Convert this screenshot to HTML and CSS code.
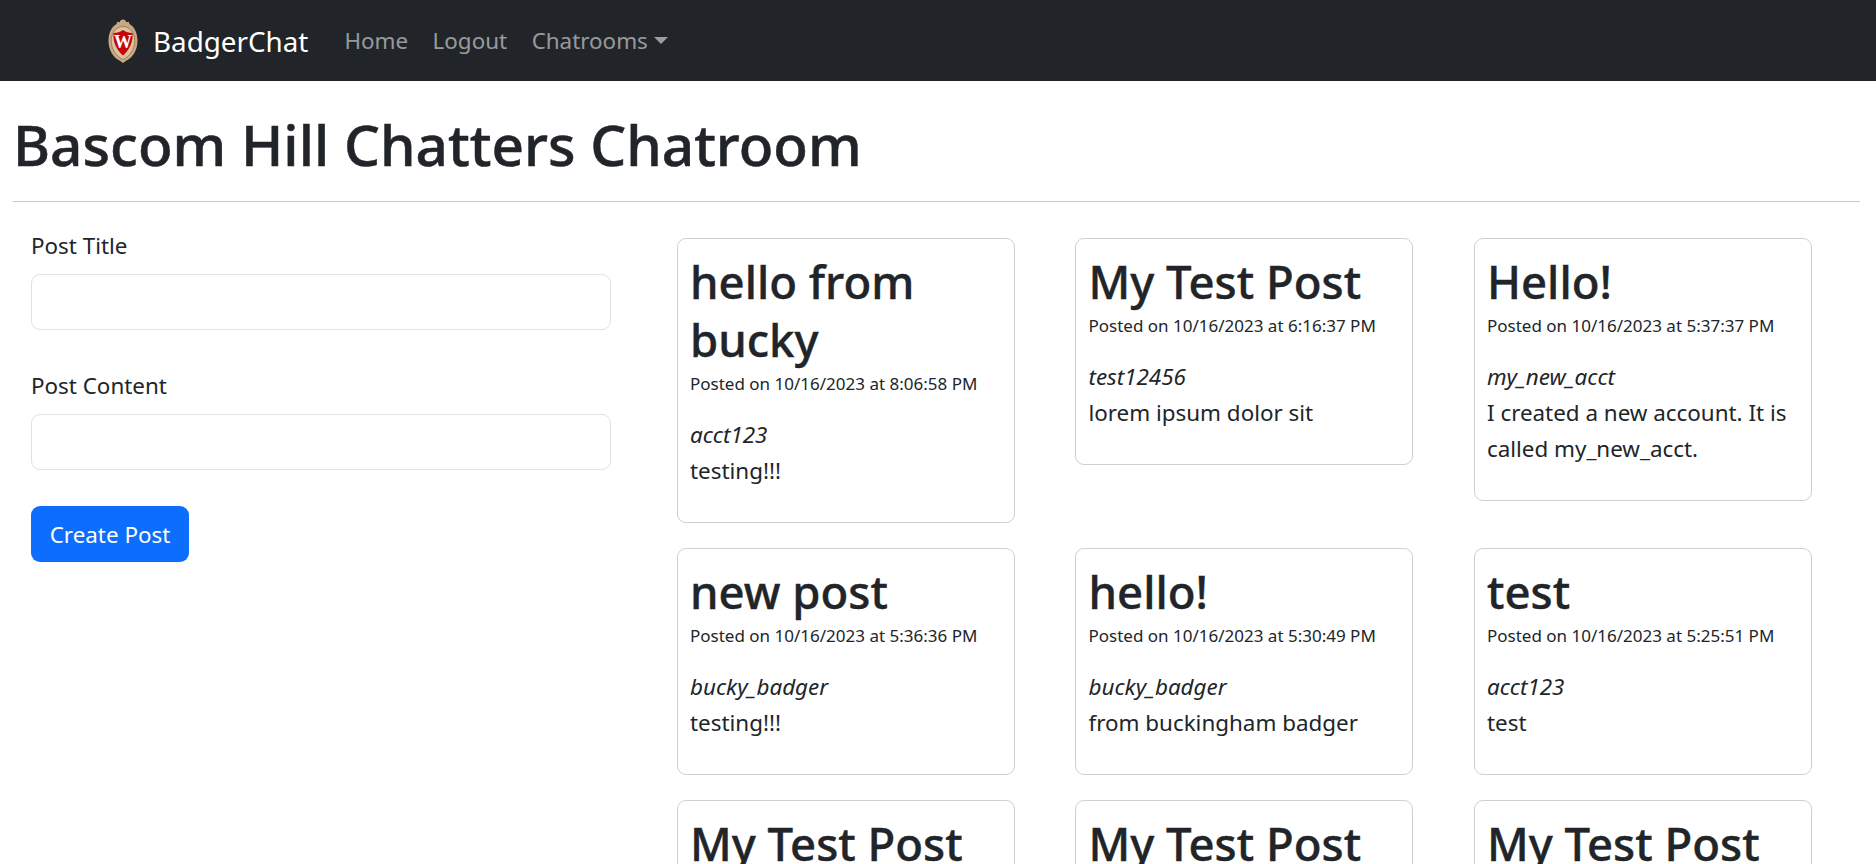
FILE: index.html
```html
<!DOCTYPE html>
<html lang="en">
<head>
<meta charset="utf-8">
<title>BadgerChat</title>
<link rel="stylesheet" href="styles.css">
</head>
<body>
<nav class="navbar">
  <a class="brand" href="#">
    <svg class="crest" viewBox="0 0 30 44" width="30" height="44" aria-hidden="true">
      <path d="M15 .5c1.800 0 3 1.200 3.300 2.800l2.400-.6 1 2.500C26 7.500 29.500 13 29.500 22c0 9-5 17-11 19.500L15 44l-3.500-2.500C5.500 39 .5 31 .5 22 .5 13 4 7.500 8.300 5.200l1-2.500 2.400.6C12 1.700 13.200.5 15 .5z" fill="#c9a782"/>
      <path d="M15 7.500c5.500 0 11.800 5 11.800 14.500 0 8.500-5.500 15.500-11.800 18.500C8.700 37.500 3.200 30.500 3.200 22 3.200 12.500 9.500 7.500 15 7.500z" fill="#dcc3a0" stroke="#8a6a4b" stroke-width=".7"/>
      <path d="M5.500 14c3.500 0 7-1.300 9.500-3.100 2.500 1.800 6 3.100 9.500 3.100.7 8.800-2.700 16.500-9.500 22.500C8.200 30.500 4.800 22.800 5.500 14z" fill="#c5050c"/>
      <text class="crest-w" x="15" y="29" text-anchor="middle">W</text>
    </svg>
    <span class="brand-name">BadgerChat</span>
  </a>
  <div class="nav-links">
    <a class="nav-link" href="#">Home</a>
    <a class="nav-link" href="#">Logout</a>
    <a class="nav-link nav-dropdown" href="#">Chatrooms<span class="caret"></span></a>
  </div>
</nav>

<main class="page">
  <h1 class="page-title">Bascom Hill Chatters Chatroom</h1>
  <hr class="rule">
  <div class="layout">
    <form class="post-form">
      <label class="field">
        <span class="field-label">Post Title</span>
        <input class="field-input" type="text">
      </label>
      <label class="field">
        <span class="field-label">Post Content</span>
        <input class="field-input" type="text">
      </label>
      <button class="btn-primary" type="button">Create Post</button>
    </form>

    <section class="posts">
      <article class="card">
        <h2 class="card-title">hello from bucky</h2>
        <p class="card-meta">Posted on 10/16/2023 at 8:06:58 PM</p>
        <p class="card-author">acct123</p>
        <p class="card-text">testing!!!</p>
      </article>
      <article class="card">
        <h2 class="card-title">My Test Post</h2>
        <p class="card-meta">Posted on 10/16/2023 at 6:16:37 PM</p>
        <p class="card-author">test12456</p>
        <p class="card-text">lorem ipsum dolor sit</p>
      </article>
      <article class="card">
        <h2 class="card-title">Hello!</h2>
        <p class="card-meta">Posted on 10/16/2023 at 5:37:37 PM</p>
        <p class="card-author">my_new_acct</p>
        <p class="card-text">I created a new account. It is called my_new_acct.</p>
      </article>
      <article class="card">
        <h2 class="card-title">new post</h2>
        <p class="card-meta">Posted on 10/16/2023 at 5:36:36 PM</p>
        <p class="card-author">bucky_badger</p>
        <p class="card-text">testing!!!</p>
      </article>
      <article class="card">
        <h2 class="card-title">hello!</h2>
        <p class="card-meta">Posted on 10/16/2023 at 5:30:49 PM</p>
        <p class="card-author">bucky_badger</p>
        <p class="card-text">from buckingham badger</p>
      </article>
      <article class="card">
        <h2 class="card-title">test</h2>
        <p class="card-meta">Posted on 10/16/2023 at 5:25:51 PM</p>
        <p class="card-author">acct123</p>
        <p class="card-text">test</p>
      </article>
      <article class="card">
        <h2 class="card-title">My Test Post</h2>
      </article>
      <article class="card">
        <h2 class="card-title">My Test Post</h2>
      </article>
      <article class="card">
        <h2 class="card-title">My Test Post</h2>
      </article>
    </section>
  </div>
</main>
</body>
</html>
```
FILE: styles.css
```css
* { box-sizing: border-box; }
html, body { height: 100%; overflow: hidden; }
body {
  margin: 0;
  background: #fff;
  color: #212529;
  font-family: "Noto Sans", "Open Sans", sans-serif;
  font-size: 22.4px;
  line-height: 36px;
}
a { text-decoration: none; }

.navbar {
  display: flex;
  align-items: center;
  height: 81px;
  padding-left: 108px;
  background: #212529;
}
.brand { display: flex; align-items: center; gap: 15px; color: #fff; }
.crest { display: block; }
.crest-w { font-family: "Liberation Serif", serif; font-weight: 700; font-size: 18px; fill: #fff; }
.brand-name { font-size: 27.800px; }
.nav-links { display: flex; gap: 24.500px; margin-left: 36px; }
.nav-link { color: rgba(255, 255, 255, .55); }
.nav-dropdown { display: flex; align-items: center; }
.caret {
  width: 0;
  height: 0;
  margin-left: 6px;
  border-top: 7px solid rgba(255, 255, 255, .55);
  border-left: 7px solid transparent;
  border-right: 7px solid transparent;
}

.page { padding: 0 16px 0 13px; }
.page-title {
  margin: 0;
  padding-top: 27px;
  font-size: 56.700px;
  font-weight: 500;
  line-height: 72px;
  -webkit-text-stroke: .5px #212529;
}
.rule { margin: 21px 0 0; border: 0; border-top: 1px solid #c8c8c8; }

.layout { display: flex; align-items: flex-start; }
.post-form { flex: none; width: 580px; margin: 26px 0 0 18px; }
.field { display: block; margin-bottom: 24px; }
.field-label { display: block; height: 46px; }
.field-input {
  display: block;
  width: 100%;
  height: 56px;
  border: 1px solid #dee2e6;
  border-radius: 9px;
  background: #fff;
}
.field + .field { margin-top: 38px; }
.btn-primary {
  display: block;
  width: 158px;
  height: 56px;
  margin-top: 36px;
  padding: 2px 0 0;
  border: 0;
  border-radius: 9px;
  background: #0d6efd;
  color: #fff;
  font: inherit;
}

.posts {
  display: grid;
  grid-template-columns: repeat(3, 337.800px);
  column-gap: 60.700px;
  row-gap: 25px;
  align-items: start;
  margin: 36px 0 0 66px;
}
.card {
  padding: 12.500px 12px;
  border: 1px solid #d0d0d0;
  border-radius: 9px;
}
.card-title {
  margin: 0;
  font-size: 45.500px;
  font-weight: 500;
  line-height: 58px;
  -webkit-text-stroke: .4px #212529;
}
.card-meta { margin: 0 0 17px; font-size: 17px; line-height: 32px; }
.card-author { margin: 0; font-style: italic; }
.card-text { margin: 0 0 21px; }
```
